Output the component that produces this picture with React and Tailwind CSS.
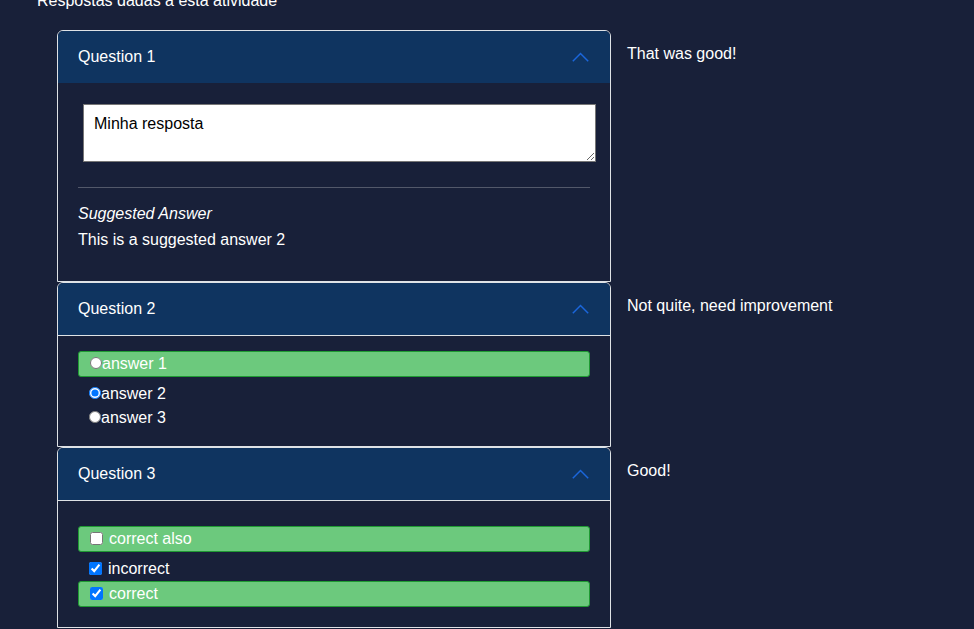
import React from "react";

const Chevron = () => (
  <svg width="17" height="10" viewBox="0 0 17 10" fill="none" className="shrink-0">
    <polyline points="0.8,9.2 8.5,1.5 16.2,9.2" stroke="#1b66db" strokeWidth="1.5" />
  </svg>
);

function Header({ title, divider }) {
  return (
    <div
      className={`bg-[#0f3460] flex items-center justify-between pl-5 pr-[21px] ${
        divider ? "h-[53px] border-b border-[#dee2e6]" : "h-[52px]"
      }`}
    >
      <span>{title}</span>
      <Chevron />
    </div>
  );
}

function Option({ type, label, checked, correct }) {
  return (
    <label
      className={`flex items-center ${
        correct
          ? "h-[26px] border border-[#1f9a33] bg-[#6cc97d] rounded-[3px] pl-[11px] mb-[5px]"
          : "h-6 pl-[11px]"
      }`}
    >
      {type === "radio" ? (
        <input type="radio" name="q2" defaultChecked={checked} className="w-3 h-3 m-0 mb-[2px]" />
      ) : (
        <input type="checkbox" defaultChecked={checked} className="w-[13px] h-[13px] m-0 mr-[6px] mb-[2px]" />
      )}
      <span>{label}</span>
    </label>
  );
}

export default function App() {
  return (
    <div className="min-h-screen bg-[#182039] text-white font-['Liberation_Sans',Arial,sans-serif] text-base leading-6 pl-[37px] flex flex-col">
      <p className="-mt-[11px]">Respostas dadas a esta atividade</p>

      <div className="mt-[17px] pl-5 flex flex-col">
        {/* Question 1 */}
        <div className="flex gap-4">
          <div className="w-[554px] shrink-0 border border-[#dee2e6] rounded-t-md overflow-hidden">
            <Header title="Question 1" />
            <div className="px-5 pt-4 h-[198px]">
              <textarea
                defaultValue="Minha resposta"
                className="block ml-[5px] mt-[5px] w-[513px] h-[58px] bg-white text-black border border-[#767676] px-[10px] py-[7px] leading-6"
              />
              <hr className="mt-[25px] mb-[14px] border-0 border-t border-white/25" />
              <p className="italic">Suggested Answer</p>
              <p className="mt-[2px]">This is a suggested answer 2</p>
            </div>
          </div>
          <div className="pt-[12px]">That was good!</div>
        </div>

        {/* Question 2 */}
        <div className="flex gap-4">
          <div className="w-[554px] shrink-0 border border-[#dee2e6] rounded-t-md overflow-hidden">
            <Header title="Question 2" divider />
            <div className="px-5 pt-[15px] pb-4">
              <Option type="radio" label="answer 1" correct />
              <Option type="radio" label="answer 2" checked />
              <Option type="radio" label="answer 3" />
            </div>
          </div>
          <div className="pt-[12px]">Not quite, need improvement</div>
        </div>

        {/* Question 3 */}
        <div className="flex gap-4">
          <div className="w-[554px] shrink-0 border border-[#dee2e6] rounded-t-md overflow-hidden">
            <Header title="Question 3" divider />
            <div className="px-5 pt-[25px] pb-[15px]">
              <Option type="checkbox" label="correct also" correct />
              <Option type="checkbox" label="incorrect" checked />
              <Option type="checkbox" label="correct" checked correct />
            </div>
          </div>
          <div className="pt-[12px]">Good!</div>
        </div>
      </div>
    </div>
  );
}
